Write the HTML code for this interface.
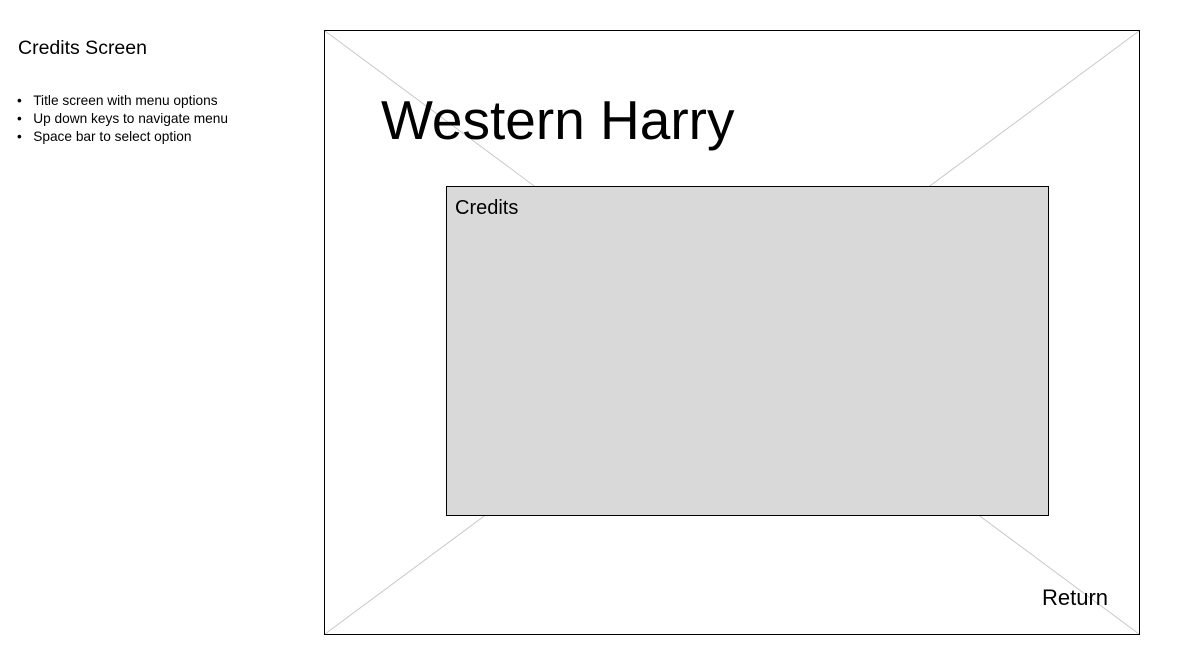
<!DOCTYPE html>
<html><head><style>
body{margin:0;width:1188px;height:667px;background:#fff;position:relative;font-family:"Liberation Sans",sans-serif;color:#000;overflow:hidden}
.a{position:absolute;white-space:nowrap}
</style></head><body>
<div class="a" style="left:18px;top:37px;font-size:19.5px">Credits Screen</div>
<div class="a" style="left:17px;top:92px;font-size:13.7px;line-height:18px">
<div>•&nbsp;&nbsp;&nbsp;Title screen with menu options</div>
<div>•&nbsp;&nbsp;&nbsp;Up down keys to navigate menu</div>
<div>•&nbsp;&nbsp;&nbsp;Space bar to select option</div>
</div>
<svg class="a" style="left:0;top:0" width="1188" height="667">
<line x1="325" y1="31" x2="1139" y2="634" stroke="#c8c8c8" stroke-width="1"/>
<line x1="1139" y1="31" x2="325" y2="634" stroke="#c8c8c8" stroke-width="1"/>
<rect x="324.5" y="30.5" width="815" height="604" fill="none" stroke="#000" stroke-width="1"/>
<rect x="446.5" y="186.5" width="602" height="329" fill="#d9d9d9" stroke="#000" stroke-width="1"/>
</svg>
<div class="a" style="left:381px;top:88px;font-size:55px">Western Harry</div>
<div class="a" style="left:455px;top:197px;font-size:20px">Credits</div>
<div class="a" style="left:1042px;top:585px;font-size:22px">Return</div>
</body></html>
